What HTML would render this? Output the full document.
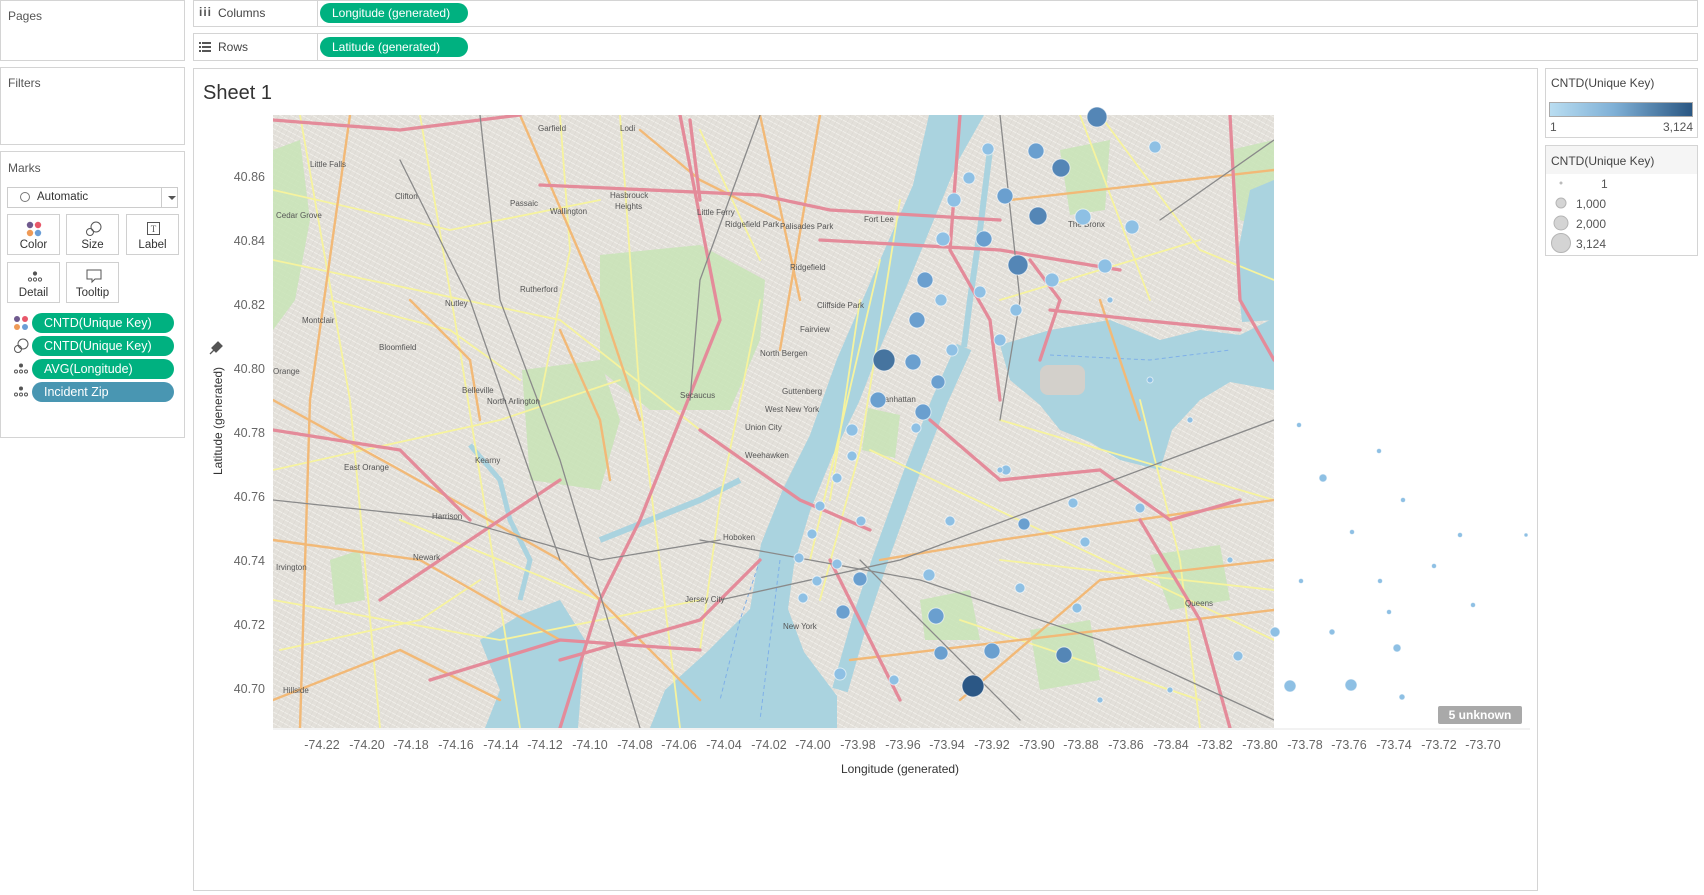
<!DOCTYPE html>
<html><head><meta charset="utf-8"><style>
*{box-sizing:border-box;margin:0;padding:0}
body{width:1704px;height:895px;background:#fff;font-family:"Liberation Sans",Arial,sans-serif;color:#333;position:relative;overflow:hidden;font-size:12px}
.box{position:absolute;border:1px solid #d4d4d4;background:#fff}
.t{position:absolute;font-size:12px;color:#555}
.pill{position:absolute;height:20px;border-radius:10px;background:#00b180;color:#fff;font-size:12.5px;line-height:20px;padding-left:12px}
.btn{position:absolute;border:1px solid #d0d0d0;background:#fff;width:53px;height:41px;text-align:center;font-size:11.5px;color:#333}
.btn span{position:absolute;left:0;right:0;bottom:3px}
</style></head><body>

<div class="box" style="left:0;top:0;width:185px;height:61px"><div class="t" style="left:7px;top:8px">Pages</div></div>
<div class="box" style="left:0;top:67px;width:185px;height:78px"><div class="t" style="left:7px;top:8px">Filters</div></div>
<div class="box" style="left:0;top:151px;width:185px;height:287px">
 <div class="t" style="left:7px;top:9px">Marks</div>
</div>
<div style="position:absolute;left:7px;top:187px;width:171px;height:21px;border:1px solid #ccc;background:#fff">
 <div style="position:absolute;left:12px;top:4px;width:10px;height:10px;border:1px solid #777;border-radius:50%"></div>
 <div style="position:absolute;left:29px;top:3px;font-size:11.5px;color:#333">Automatic</div>
 <div style="position:absolute;left:153px;top:0;width:1px;height:19px;background:#ccc"></div>
 <div style="position:absolute;left:160px;top:8px;border-left:4px solid transparent;border-right:4px solid transparent;border-top:4px solid #555"></div>
</div>
<div class="btn" style="left:7px;top:214px"><svg width="16" height="16" style="position:absolute;left:18px;top:6px"><circle cx="4" cy="4" r="3.2" fill="#6f5a8e"/><circle cx="12" cy="4" r="3.2" fill="#e8586a"/><circle cx="4" cy="12" r="3.2" fill="#ef9a56"/><circle cx="12" cy="12" r="3.2" fill="#6b9ed6"/></svg><span>Color</span></div>
<div class="btn" style="left:66px;top:214px"><svg width="18" height="16" style="position:absolute;left:18px;top:6px" fill="none" stroke="#555"><circle cx="11" cy="6" r="5"/><circle cx="5" cy="11" r="3.5"/></svg><span>Size</span></div>
<div class="btn" style="left:126px;top:214px"><svg width="14" height="14" style="position:absolute;left:20px;top:7px"><rect x="0.5" y="0.5" width="12" height="12" fill="none" stroke="#555"/><text x="6.5" y="10" font-size="9" text-anchor="middle" fill="#555" font-family="Liberation Serif">T</text></svg><span>Label</span></div>
<div class="btn" style="left:7px;top:262px"><svg width="16" height="12" style="position:absolute;left:19px;top:8px" fill="none" stroke="#555"><circle cx="8" cy="2.5" r="1.6" fill="#555"/><circle cx="3" cy="8.5" r="1.6"/><circle cx="8" cy="8.5" r="1.6"/><circle cx="13" cy="8.5" r="1.6"/></svg><span>Detail</span></div>
<div class="btn" style="left:66px;top:262px"><svg width="16" height="16" style="position:absolute;left:19px;top:6px" fill="none" stroke="#555"><path d="M1 1h14v9H9l-3 3v-3H1z"/></svg><span>Tooltip</span></div>

<svg width="16" height="16" style="position:absolute;left:13px;top:315px"><circle cx="4" cy="4" r="3" fill="#6f5a8e"/><circle cx="12" cy="4" r="3" fill="#e8586a"/><circle cx="4" cy="12" r="3" fill="#ef9a56"/><circle cx="12" cy="12" r="3" fill="#6b9ed6"/></svg>
<div class="pill" style="left:32px;top:313px;width:142px">CNTD(Unique Key)</div>
<svg width="16" height="16" style="position:absolute;left:13px;top:338px" fill="none" stroke="#555"><circle cx="10" cy="6" r="5"/><circle cx="5" cy="11" r="3.5"/></svg>
<div class="pill" style="left:32px;top:336px;width:142px">CNTD(Unique Key)</div>
<svg width="16" height="12" style="position:absolute;left:13px;top:363px" fill="none" stroke="#555"><circle cx="8" cy="2.5" r="1.5" fill="#555"/><circle cx="3" cy="8.5" r="1.5"/><circle cx="8" cy="8.5" r="1.5"/><circle cx="13" cy="8.5" r="1.5"/></svg>
<div class="pill" style="left:32px;top:359px;width:142px">AVG(Longitude)</div>
<svg width="16" height="12" style="position:absolute;left:13px;top:386px" fill="none" stroke="#555"><circle cx="8" cy="2.5" r="1.5" fill="#555"/><circle cx="3" cy="8.5" r="1.5"/><circle cx="8" cy="8.5" r="1.5"/><circle cx="13" cy="8.5" r="1.5"/></svg>
<div class="pill" style="left:32px;top:382px;width:142px;background:#4996b2">Incident Zip</div>

<div class="box" style="left:193px;top:0;width:1505px;height:27px"></div>
<div style="position:absolute;left:317px;top:0;width:1px;height:27px;background:#d4d4d4"></div>
<div style="position:absolute;left:199px;top:5px;font-size:12px;color:#555;letter-spacing:1px;font-weight:bold">iii</div>
<div class="t" style="left:218px;top:6px;color:#444">Columns</div>
<div class="pill" style="left:320px;top:3px;width:148px;font-size:12px">Longitude (generated)</div>
<div class="box" style="left:193px;top:33px;width:1505px;height:28px"></div>
<div style="position:absolute;left:317px;top:33px;width:1px;height:28px;background:#d4d4d4"></div>
<svg width="12" height="10" style="position:absolute;left:199px;top:42px" fill="#555"><rect x="0" y="0" width="2" height="2"/><rect x="3" y="0" width="9" height="2"/><rect x="0" y="4" width="2" height="2"/><rect x="3" y="4" width="9" height="2"/><rect x="0" y="8" width="2" height="2"/><rect x="3" y="8" width="9" height="2"/></svg>
<div class="t" style="left:218px;top:40px;color:#444">Rows</div>
<div class="pill" style="left:320px;top:37px;width:148px;font-size:12px">Latitude (generated)</div>

<div class="box" style="left:193px;top:68px;width:1345px;height:823px"></div>
<div style="position:absolute;left:203px;top:82px;font-size:20px;color:#333">Sheet 1</div>

<svg width="1704" height="895" style="position:absolute;left:0;top:0">
<defs>
 <clipPath id="mc"><rect x="273" y="115" width="1001" height="613"/></clipPath>
 <pattern id="st" width="5" height="5" patternUnits="userSpaceOnUse" patternTransform="rotate(28)">
  <rect width="5" height="5" fill="#e3e0da"/><line x1="0" y1="0" x2="5" y2="0" stroke="#f7f6f2" stroke-width="1.2"/><line x1="0" y1="0" x2="0" y2="5" stroke="#d2cfc9" stroke-width="0.6"/>
 </pattern>
</defs>
<g clip-path="url(#mc)">
 <rect x="273" y="115" width="1001" height="613" fill="url(#st)"/>
 <g fill="#c8e4b6" opacity="0.85">
  <path d="M273 150 L300 140 L310 220 L295 300 L273 330Z"/>
  <path d="M600 255 L700 245 L765 280 L760 340 L730 410 L650 410 L600 370Z"/>
  <path d="M522 370 L600 360 L620 420 L600 490 L530 480Z"/>
  <path d="M868 408 L900 415 L895 458 L862 450Z"/>
  <path d="M1060 150 L1110 140 L1105 210 L1070 215Z"/>
  <path d="M1150 555 L1220 545 L1230 600 L1170 610Z"/>
  <path d="M1030 630 L1090 620 L1100 680 L1040 690Z"/>
  <path d="M920 600 L970 590 L980 640 L925 640Z"/>
  <path d="M1230 150 L1274 140 L1274 230 L1240 220Z"/>
  <path d="M330 560 L360 550 L365 600 L335 605Z"/>
 </g>
 <g fill="#aad3df">
  <path d="M929 115 L913 185 L870 283 L837 359 L810 435 L783 489 L761 544 L750 609 L707 652 L665 690 L650 728 L837 728 L837 696 L804 652 L788 609 L794 565 L810 511 L832 457 L859 402 L880 348 L908 283 L935 217 L957 163 L984 115Z"/>
  <path d="M480 640 L520 615 L560 600 L585 640 L578 728 L485 728 L500 690Z"/>
  <path d="M1000 345 L1050 330 L1110 320 L1160 340 L1200 330 L1240 335 L1274 318 L1274 390 L1230 382 L1200 400 L1172 430 L1160 470 L1120 460 L1090 442 L1060 430 L1040 405 L1010 380Z"/>
  <path d="M1250 190 L1274 180 L1274 320 L1242 322 L1236 262Z"/>
 </g>
 <g fill="none" stroke="#aad3df">
  <path d="M964 347 L940 400 L914 466 L880 560 L860 620 L840 690" stroke-width="16"/>
  <path d="M990 150 L980 230 L970 300 L964 347" stroke-width="6"/>
  <path d="M470 445 L500 480 L510 520 L530 560 L520 600" stroke-width="5"/>
  <path d="M600 540 L650 520 L700 500 L740 480" stroke-width="6"/>
 </g>
 <g fill="none" stroke="#7fb0e8" stroke-width="1" stroke-dasharray="4 3">
  <path d="M760 560 L740 620 L720 700"/><path d="M780 560 L770 640 L760 720"/><path d="M1050 355 L1150 360 L1230 350"/>
 </g>
 <rect x="1040" y="365" width="45" height="30" rx="8" fill="#d3d0cb"/>
 <g fill="none" stroke-linecap="round">
  <g stroke="#f6f39e" stroke-width="1.8">
   <path d="M273 260 L560 320 L700 430"/><path d="M300 115 L350 400 L380 728"/><path d="M420 115 L460 350 L520 728"/>
   <path d="M273 600 L500 640 L700 600"/><path d="M620 115 L640 400 L680 728"/><path d="M1000 420 L1274 500"/>
   <path d="M870 450 L1274 640"/><path d="M273 470 L500 420 L620 380"/><path d="M1080 115 L1150 300"/>
   <path d="M273 190 L450 230 L600 200"/><path d="M330 300 L450 330 L520 380"/><path d="M280 650 L420 620 L480 580"/>
   <path d="M560 115 L570 250 L540 400"/><path d="M760 300 L720 500 L700 650"/><path d="M860 300 L830 500"/>
   <path d="M900 200 L860 450 L820 600"/><path d="M880 260 L810 560"/><path d="M1000 560 L1274 590"/>
   <path d="M960 620 L1200 700"/><path d="M1100 115 L1200 250 L1274 280"/><path d="M1000 300 L1200 240"/>
   <path d="M400 520 L500 560 L600 600"/><path d="M700 130 L760 260"/><path d="M1140 400 L1180 560 L1200 728"/>
  </g>
  <g stroke="#f2b977" stroke-width="2.4">
   <path d="M273 400 L400 470 L560 560 L700 700"/><path d="M520 115 L600 300 L640 420"/><path d="M760 115 L800 300"/>
   <path d="M350 115 L310 400 L300 728"/><path d="M880 560 L1000 540 L1274 500"/><path d="M850 660 L1274 610"/>
   <path d="M1010 200 L1274 170"/><path d="M960 700 L1100 580 L1274 560"/><path d="M640 130 L700 180 L780 220"/>
   <path d="M273 700 L400 650 L500 700"/><path d="M560 330 L600 420 L610 480"/><path d="M410 300 L470 360 L480 420"/>
   <path d="M1100 300 L1140 420"/><path d="M820 115 L780 350"/><path d="M273 540 L420 560 L560 640"/>
  </g>
  <g stroke="#e48b9a" stroke-width="3.3">
   <path d="M273 120 L400 130 L520 115"/><path d="M680 115 L720 320 L640 520 L600 600 L560 728"/>
   <path d="M560 660 L700 620 L760 560"/><path d="M540 185 L760 195 L830 210 L1000 220"/>
   <path d="M430 680 L560 640 L700 650"/><path d="M1050 310 L1140 320 L1240 330"/>
   <path d="M1230 115 L1240 300 L1274 360"/><path d="M930 420 L1000 480 L1100 470 L1170 520 L1240 500"/>
   <path d="M960 115 L950 250 L990 320 L1000 400"/><path d="M700 430 L800 500 L870 530"/>
   <path d="M380 600 L470 540 L560 480"/><path d="M830 560 L860 620 L900 700"/>
   <path d="M1140 520 L1200 620 L1230 728"/><path d="M820 240 L1000 250 L1120 270"/>
   <path d="M273 430 L400 450 L470 520"/><path d="M690 120 L700 200"/><path d="M1030 260 L1060 300 L1040 360"/>
  </g>
  <g stroke="#8a8a8a" stroke-width="1.3">
   <path d="M480 115 L500 300 L560 460 L640 728"/><path d="M400 160 L470 300 L560 560"/><path d="M720 600 L900 560 L1274 420"/>
   <path d="M860 560 L1020 720"/><path d="M1000 115 L1020 300 L1000 420"/><path d="M700 540 L920 580 L1100 640 L1274 720"/>
   <path d="M273 500 L460 520 L600 560 L720 540"/><path d="M760 115 L700 280 L690 400"/><path d="M1160 220 L1274 140"/>
  </g>
 </g>
 <g font-size="8" fill="#555" font-family="Liberation Sans">
  <text x="310" y="167">Little Falls</text><text x="395" y="199">Clifton</text><text x="276" y="218">Cedar Grove</text>
  <text x="538" y="131">Garfield</text><text x="620" y="131">Lodi</text><text x="510" y="206">Passaic</text>
  <text x="610" y="198">Hasbrouck</text><text x="615" y="209">Heights</text><text x="550" y="214">Wallington</text>
  <text x="725" y="227">Ridgefield Park</text><text x="697" y="215">Little Ferry</text><text x="780" y="229">Palisades Park</text>
  <text x="790" y="270">Ridgefield</text><text x="864" y="222">Fort Lee</text><text x="520" y="292">Rutherford</text>
  <text x="445" y="306">Nutley</text><text x="302" y="323">Montclair</text><text x="379" y="350">Bloomfield</text>
  <text x="817" y="308">Cliffside Park</text><text x="800" y="332">Fairview</text><text x="760" y="356">North Bergen</text>
  <text x="273" y="374">Orange</text><text x="462" y="393">Belleville</text><text x="487" y="404">North Arlington</text>
  <text x="680" y="398">Secaucus</text><text x="782" y="394">Guttenberg</text><text x="765" y="412">West New York</text>
  <text x="745" y="430">Union City</text><text x="745" y="458">Weehawken</text><text x="344" y="470">East Orange</text>
  <text x="475" y="463">Kearny</text><text x="878" y="402">Manhattan</text><text x="432" y="519">Harrison</text>
  <text x="413" y="560">Newark</text><text x="723" y="540">Hoboken</text><text x="276" y="570">Irvington</text>
  <text x="685" y="602">Jersey City</text><text x="783" y="629">New York</text><text x="283" y="693">Hillside</text>
  <text x="1068" y="227">The Bronx</text><text x="1185" y="606">Queens</text>
 </g>
</g>

<g stroke="#fff" stroke-opacity="0.6" stroke-width="1">
 <g fill="#8ec0e4">
  <circle cx="988" cy="149" r="6"/><circle cx="1155" cy="147" r="6"/><circle cx="969" cy="178" r="6"/><circle cx="954" cy="200" r="7"/>
  <circle cx="1083" cy="217" r="8"/><circle cx="1132" cy="227" r="7"/><circle cx="943" cy="239" r="7"/><circle cx="1105" cy="266" r="7"/>
  <circle cx="1052" cy="280" r="7"/><circle cx="980" cy="292" r="6"/><circle cx="941" cy="300" r="6"/><circle cx="1016" cy="310" r="6"/>
  <circle cx="1000" cy="340" r="6"/><circle cx="952" cy="350" r="6"/><circle cx="852" cy="430" r="6"/><circle cx="916" cy="428" r="5"/>
  <circle cx="1006" cy="470" r="5"/><circle cx="837" cy="478" r="5"/><circle cx="852" cy="456" r="5"/><circle cx="1073" cy="503" r="5"/>
  <circle cx="950" cy="521" r="5"/><circle cx="861" cy="521" r="5"/><circle cx="1140" cy="508" r="5"/><circle cx="820" cy="506" r="5"/>
  <circle cx="812" cy="534" r="5"/><circle cx="1085" cy="542" r="5"/><circle cx="799" cy="558" r="5"/><circle cx="837" cy="564" r="5"/>
  <circle cx="929" cy="575" r="6"/><circle cx="817" cy="581" r="5"/><circle cx="1020" cy="588" r="5"/><circle cx="803" cy="598" r="5"/>
  <circle cx="1077" cy="608" r="5"/><circle cx="1238" cy="656" r="5"/><circle cx="840" cy="674" r="6"/><circle cx="894" cy="680" r="5"/>
  <circle cx="1000" cy="470" r="3"/><circle cx="1110" cy="300" r="3"/><circle cx="1150" cy="380" r="3"/><circle cx="1190" cy="420" r="3"/>
  <circle cx="1230" cy="560" r="3"/><circle cx="1170" cy="690" r="3"/><circle cx="1100" cy="700" r="3"/>
  <circle cx="1275" cy="632" r="5"/><circle cx="1332" cy="632" r="3"/><circle cx="1397" cy="648" r="4"/><circle cx="1290" cy="686" r="6"/>
  <circle cx="1351" cy="685" r="6"/><circle cx="1402" cy="697" r="3"/><circle cx="1299" cy="425" r="2.5"/><circle cx="1379" cy="451" r="2.5"/>
  <circle cx="1323" cy="478" r="4"/><circle cx="1403" cy="500" r="2.5"/><circle cx="1352" cy="532" r="2.5"/><circle cx="1460" cy="535" r="2.5"/>
  <circle cx="1526" cy="535" r="2"/><circle cx="1434" cy="566" r="2.5"/><circle cx="1301" cy="581" r="2.5"/><circle cx="1380" cy="581" r="2.5"/>
  <circle cx="1473" cy="605" r="2.5"/><circle cx="1389" cy="612" r="2.5"/>
 </g>
 <g fill="#6a9fcf">
  <circle cx="1036" cy="151" r="8"/><circle cx="1005" cy="196" r="8"/><circle cx="984" cy="239" r="8"/><circle cx="925" cy="280" r="8"/>
  <circle cx="917" cy="320" r="8"/><circle cx="913" cy="362" r="8"/><circle cx="938" cy="382" r="7"/><circle cx="878" cy="400" r="8"/>
  <circle cx="923" cy="412" r="8"/><circle cx="1024" cy="524" r="6"/><circle cx="860" cy="579" r="7"/><circle cx="843" cy="612" r="7"/>
  <circle cx="936" cy="616" r="8"/><circle cx="941" cy="653" r="7"/><circle cx="992" cy="651" r="8"/>
 </g>
 <g fill="#5486b6">
  <circle cx="1097" cy="117" r="10"/><circle cx="1061" cy="168" r="9"/><circle cx="1038" cy="216" r="9"/><circle cx="1018" cy="265" r="10"/><circle cx="1064" cy="655" r="8"/>
 </g>
 <circle cx="884" cy="360" r="11" fill="#46749f"/>
 <circle cx="973" cy="686" r="11" fill="#2b5785"/>
</g>

<line x1="273" y1="729" x2="1530" y2="729" stroke="#e6e6e6"/>
<g font-size="12.5" fill="#666" font-family="Liberation Sans" text-anchor="end">
 <text x="265" y="181">40.86</text><text x="265" y="245">40.84</text><text x="265" y="309">40.82</text><text x="265" y="373">40.80</text>
 <text x="265" y="437">40.78</text><text x="265" y="501">40.76</text><text x="265" y="565">40.74</text><text x="265" y="629">40.72</text><text x="265" y="693">40.70</text>
</g>
<g font-size="12.5" fill="#666" font-family="Liberation Sans" text-anchor="middle">
 <text x="322" y="749">-74.22</text><text x="367" y="749">-74.20</text><text x="411" y="749">-74.18</text><text x="456" y="749">-74.16</text>
 <text x="501" y="749">-74.14</text><text x="545" y="749">-74.12</text><text x="590" y="749">-74.10</text><text x="635" y="749">-74.08</text>
 <text x="679" y="749">-74.06</text><text x="724" y="749">-74.04</text><text x="769" y="749">-74.02</text><text x="813" y="749">-74.00</text>
 <text x="858" y="749">-73.98</text><text x="903" y="749">-73.96</text><text x="947" y="749">-73.94</text><text x="992" y="749">-73.92</text>
 <text x="1037" y="749">-73.90</text><text x="1081" y="749">-73.88</text><text x="1126" y="749">-73.86</text><text x="1171" y="749">-73.84</text>
 <text x="1215" y="749">-73.82</text><text x="1260" y="749">-73.80</text><text x="1305" y="749">-73.78</text><text x="1349" y="749">-73.76</text>
 <text x="1394" y="749">-73.74</text><text x="1439" y="749">-73.72</text><text x="1483" y="749">-73.70</text>
 <text x="900" y="773" fill="#333" font-size="12">Longitude (generated)</text>
</g>
<text transform="translate(222,421) rotate(-90)" text-anchor="middle" font-size="12" fill="#333" font-family="Liberation Sans">Latitude (generated)</text>
<path d="M212 348 l6 -6 l4 4 l-6 6 z M214 350 l-4 4" fill="#555" stroke="#555" stroke-width="1.3"/>
</svg>

<div style="position:absolute;left:1438px;top:706px;width:84px;height:18px;background:#a9a9a9;border-radius:2px;color:#fff;font-weight:bold;font-size:12px;text-align:center;line-height:18px">5 unknown</div>

<div class="box" style="left:1545px;top:68px;width:153px;height:70px">
 <div style="position:absolute;left:5px;top:7px;font-size:12px;color:#444">CNTD(Unique Key)</div>
 <div style="position:absolute;left:3px;top:33px;width:144px;height:15px;border:1px solid #aaa;background:linear-gradient(90deg,#b9ddf1,#7fb0d6 45%,#2a5783)"></div>
 <div style="position:absolute;left:4px;top:51px;font-size:12px;color:#555">1</div>
 <div style="position:absolute;right:4px;top:51px;font-size:12px;color:#555">3,124</div>
</div>
<div class="box" style="left:1545px;top:145px;width:153px;height:111px">
 <div style="position:absolute;left:0;top:0;width:151px;height:28px;background:#f5f5f5"></div>
 <div style="position:absolute;left:5px;top:8px;font-size:12px;color:#444">CNTD(Unique Key)</div>
 <svg width="30" height="82" style="position:absolute;left:2px;top:28px" fill="#d4d4d4" stroke="#b5b5b5"><circle cx="13" cy="9" r="1.5" stroke="none" fill="#bbb"/><circle cx="13" cy="29" r="5"/><circle cx="13" cy="49" r="7"/><circle cx="13" cy="69" r="9.5"/></svg>
 <div style="position:absolute;left:55px;top:31px;font-size:12px;color:#555">1</div>
 <div style="position:absolute;left:30px;top:51px;font-size:12px;color:#555">1,000</div>
 <div style="position:absolute;left:30px;top:71px;font-size:12px;color:#555">2,000</div>
 <div style="position:absolute;left:30px;top:91px;font-size:12px;color:#555">3,124</div>
</div>
</body></html>
